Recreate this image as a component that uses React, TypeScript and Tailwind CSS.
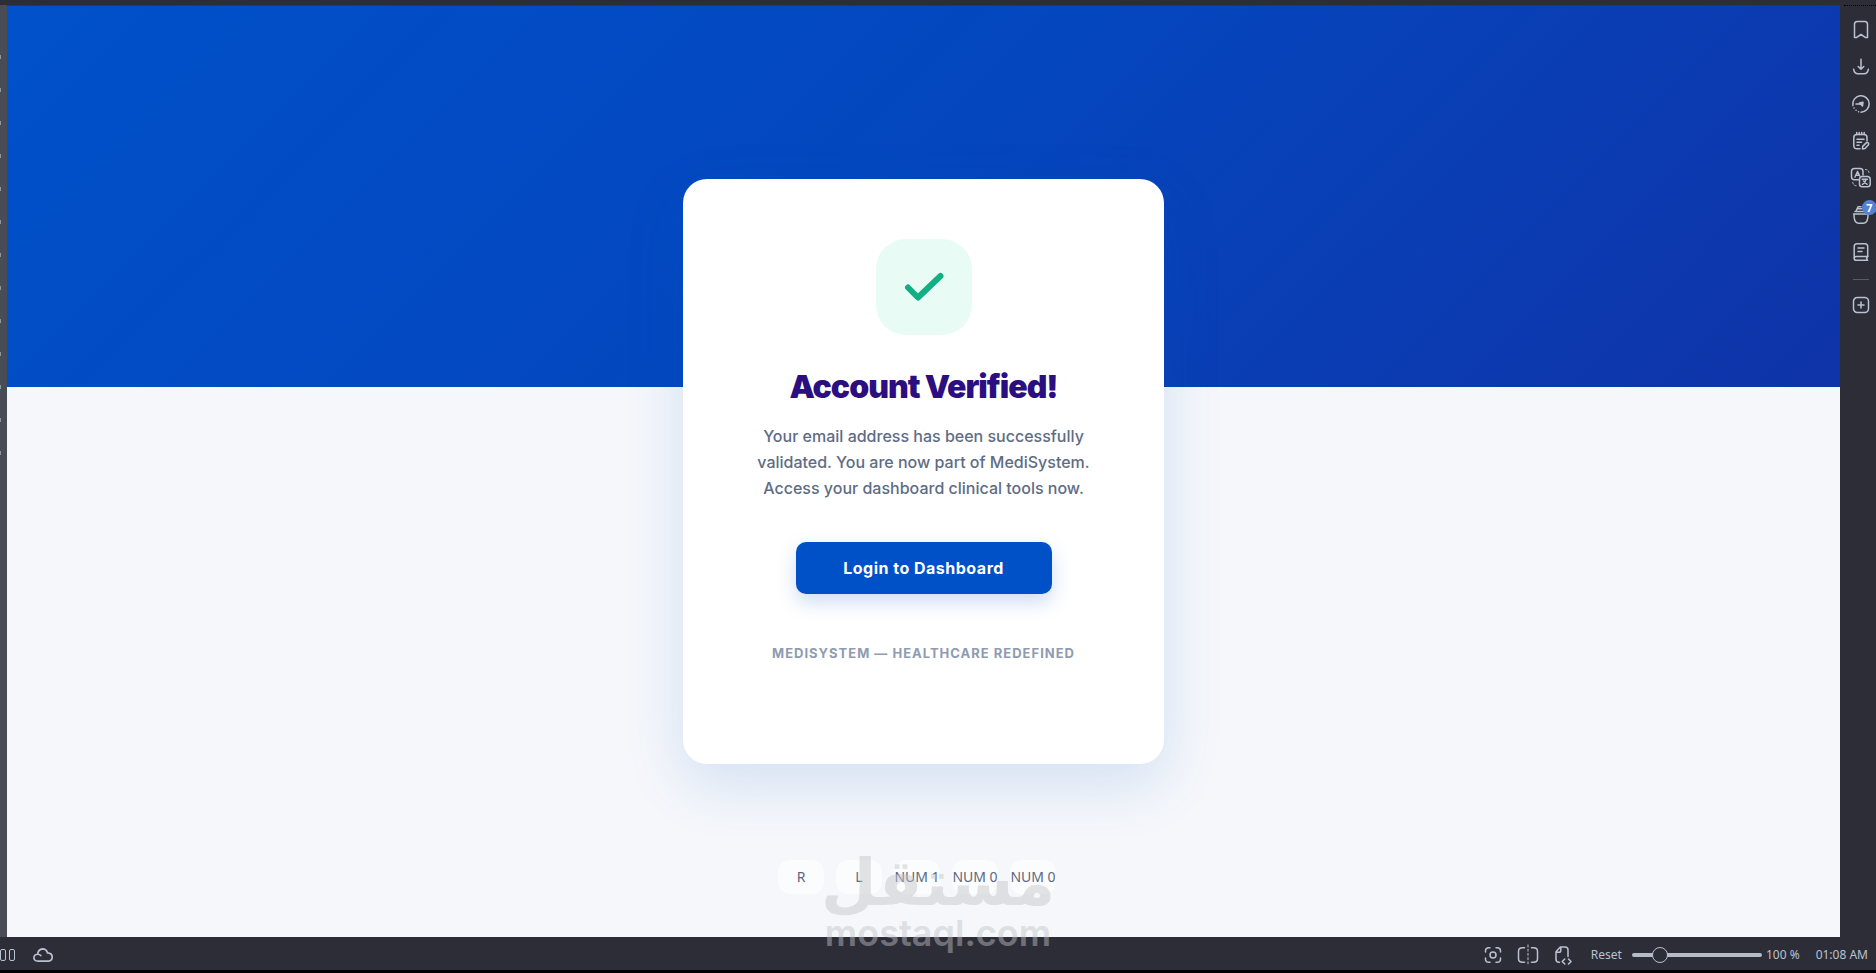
import React from 'react';

interface IconProps {
  children: React.ReactNode;
  size?: string;
}

const Icon: React.FC<IconProps> = ({ children, size = 'size-[18px]' }) => (
  <svg
    viewBox="0 0 18 18"
    className={`${size} shrink-0 overflow-visible`}
    fill="none"
    stroke="currentColor"
    strokeWidth="1.5"
    strokeLinecap="round"
    strokeLinejoin="round"
    aria-hidden="true"
  >
    {children}
  </svg>
);

const SIDE_TOOLS = [
  {
    label: 'Bookmarks',
    icon: <path d="M2.5 3.600Q2.500.600 5.200.600h7.600q2.700 0 2.700 3v13h-1.800L9 13.500l-4.700 3.100H2.500z" />,
  },
  {
    label: 'Downloads',
    icon: <path d="M9 1.200v9.600M6.200 8.500 9 11.200l2.800-2.700M1.600 11.200c.6 3.500 2 4.600 4.400 4.600h6c2.400 0 3.800-1.100 4.400-4.600" />,
  },
  {
    label: 'Speed',
    icon: (
      <>
        <path d="M.9 10.500A8.200 8.200 0 1 1 9 17.200" />
        <path d="M4 9h5" />
        <path d="M7.500 8 11 7.200 10.500 11z" fill="currentColor" />
        <path d="M2 13h.1M4 15.300h.1M6.500 16.800h.1" />
      </>
    ),
  },
  {
    label: 'Notes',
    icon: (
      <>
        <path d="M8 16.800H5Q1.800 16.800 1.800 13.500V5.500Q1.800 2.500 5 2.500h7q3 0 3 3V9" />
        <path d="M4.700.6v2M7.200.6v2M9.700.6v2M12.200.6v2M5 7.300h7M5 10.300h4.500M5 13.200h2" />
        <path d="m10.500 17 .2-2.600 3.500-3.500q1.200-.9 2.200.1.800 1-.1 2.100l-3.300 3.500z" />
      </>
    ),
  },
  {
    label: 'Translate',
    icon: (
      <>
        <path d="M6.500 10.800H2.500Q-.5 10.800-.5 7.800V2.500Q-.5-.5 2.500-.5H8q3 0 3 3v3.500" />
        <path d="m3 8 2.500-5.500L7.700 7M4 6.300h2.800" />
        <rect x="7.500" y="7.500" width="10.700" height="10.300" rx="2.800" />
        <path d="M10.200 10.300h5.200M14 10.500q-.6 3.200-3.500 4.800M11.500 12l3.500 3.300" />
        <path d="M13.500.5q3 .2 3.500 3M.8 13.500q.5 3 3.500 3.300" strokeDasharray="1.500 2" strokeWidth="1" />
      </>
    ),
  },
  {
    label: 'Basket',
    badge: 7,
    icon: (
      <>
        <path d="M1.500 8h15M2 8.200Q1.800 17.200 6.500 17.200h5Q16.200 17.200 16 8.200" />
        <path d="M3 5.500h9M5 2.800h5M4 5.300 6 .8h3" />
      </>
    ),
  },
  {
    label: 'Reading list',
    icon: (
      <>
        <path d="M15.700 13.500V3.500q0-2.800-2.800-2.800H5Q2.200.700 2.200 3.500v11" />
        <path d="M15.700 13.500H4.300q-2.100 0-2.100 1.900t2.100 1.900h11.400l-1.200-1.900z" />
        <path d="M6 5h6M6 8.500h4" />
      </>
    ),
  },
];

const ZOOM_TOOLS = [
  {
    label: 'Capture',
    icon: (
      <>
        <path d="M1.500 6V5q0-3.300 3.300-3.300H6M12 1.700h1.200q3.300 0 3.300 3.300v1M16.500 12v1q0 3.300-3.300 3.300H12M6 16.300H4.800Q1.500 16.300 1.500 13v-1" />
        <circle cx="9" cy="9" r="3" />
      </>
    ),
  },
  {
    label: 'Split view',
    icon: (
      <>
        <path d="M5.500 1.800H3.500Q-.5 1.800-.5 5.300v7.400q0 3.500 4 3.500h2M12.500 1.800h2q4 0 4 3.500v7.400q0 3.500-4 3.500h-2" />
        <path d="M9-1v20" strokeDasharray="2 2.200" strokeWidth="1" />
      </>
    ),
  },
  {
    label: 'Page source',
    icon: (
      <>
        <path d="M5.500 16.200H5q-3 0-3-3V5.800L6.300 1H11q3 0 3 3v6.500M2.300 6.300H5q1.800 0 1.800-1.800V1.200" />
        <path d="m10.800 13-2.600 2.500 2.600 2.500M14.500 13l2.600 2.500-2.600 2.500" />
      </>
    ),
  },
];

const KEYS = ['R', 'L', 'NUM 1', 'NUM 0', 'NUM 0'];

const SideBar = () => (
  <aside className="w-9 shrink-0 bg-[#2d2d38] text-[#b9c2d0]">
    <div className="ml-1 border-t border-dotted border-black" />
    <nav className="flex w-[42px] flex-col items-center pt-[5px]">
      {SIDE_TOOLS.map(tool => (
        <button key={tool.label} aria-label={tool.label} className="relative flex h-[37px] w-8 items-center justify-center">
          <Icon>{tool.icon}</Icon>
          {tool.badge && (
            <span className="absolute top-1 right-0 flex size-[15px] items-center justify-center rounded-full bg-[#5482d2] font-['Noto_Sans',sans-serif] text-[11px] leading-none font-bold text-white">
              {tool.badge}
            </span>
          )}
        </button>
      ))}
      <hr className="mt-[9px] mb-[6px] w-4 border-[#595b67]" />
      <button aria-label="Add" className="flex h-[37px] w-8 items-center justify-center">
        <Icon>
          <rect x="1.500" y="1.500" width="15" height="15" rx="3.800" />
          <path d="M9 6v6M6 9h6" />
        </Icon>
      </button>
    </nav>
  </aside>
);

const VerifiedCard = () => (
  <section className="relative flex h-[585px] w-[481px] flex-col items-center rounded-3xl bg-white px-12 pt-[60px] text-center shadow-[0_20px_60px_rgba(0,92,190,0.14)]">
    <div className="flex size-24 items-center justify-center rounded-[30px] bg-[#e8fcf5]">
      <svg viewBox="0 0 40 30" className="h-[30px] w-10" fill="none" stroke="#12ae84" strokeWidth="6" strokeLinecap="round" strokeLinejoin="round" aria-hidden="true">
        <path d="m4 15.500 10 10L36.500 4" />
      </svg>
    </div>
    <h1 className="mt-8 text-[32px] leading-10 font-black tracking-[-1px] text-[#2b0f80]">Account Verified!</h1>
    <p className="mt-4 w-[360px] text-base leading-[26px] font-medium text-[#5e6c84]">
      Your email address has been successfully validated. You are now part of MediSystem. Access your dashboard clinical tools now.
    </p>
    <a
      href="#dashboard"
      className="mt-[41px] flex h-[52px] w-64 items-center justify-center rounded-[10px] bg-[#0051c8] text-base font-bold tracking-[0.5px] text-white shadow-[0_8px_20px_rgba(0,82,204,0.2)]"
    >
      Login to Dashboard
    </a>
    <p className="mt-12 text-[13px] leading-[22px] font-bold tracking-[1px] text-[#8f9bb0] uppercase">MediSystem — Healthcare Redefined</p>
  </section>
);

const StatusBar = () => (
  <footer className="flex h-[33px] shrink-0 items-center justify-between bg-[#2d2d38] pt-[3px] pr-2 font-['Noto_Sans',sans-serif] text-xs text-[#b9c2d0]">
    <div className="flex items-center gap-[18px]">
      <button aria-label="Panels" className="flex gap-[3px]">
        <span className="h-3 w-[6px] rounded-[2px] border border-current" />
        <span className="h-3 w-[6px] rounded-[2px] border border-current" />
      </button>
      <button aria-label="Sync">
        <Icon size="size-5">
          <path d="M4.500 14.500q-3.500 0-3.700-3 0-2.800 3.300-3.200Q4.600 4 8.700 3.500q3.300 0 4.400 3.600 4 .2 4.200 3.700 0 3.500-3.500 3.700zM4.100 8.300q1.800-.1 2.900 1.200" />
        </Icon>
      </button>
    </div>
    <div className="flex items-center">
      <div className="mr-[19px] flex gap-[17px]">
        {ZOOM_TOOLS.map(tool => (
          <button key={tool.label} aria-label={tool.label}>
            <Icon>{tool.icon}</Icon>
          </button>
        ))}
      </div>
      <button className="mr-[10px]">Reset</button>
      <input
        type="range"
        aria-label="Page zoom"
        min={20}
        max={500}
        defaultValue={103}
        className="mr-1 h-1 w-[130px] appearance-none rounded-full bg-[#b4bccb] [&::-webkit-slider-thumb]:size-4 [&::-webkit-slider-thumb]:appearance-none [&::-webkit-slider-thumb]:rounded-full [&::-webkit-slider-thumb]:border [&::-webkit-slider-thumb]:border-[#b9c2d0] [&::-webkit-slider-thumb]:bg-[#2d2d38]"
      />
      <span className="mr-4">100 %</span>
      <time>01:08 AM</time>
    </div>
  </footer>
);

// tab strip of the neighbouring panel, only its last pixels are visible
const TabEdge = () => (
  <div className="flex w-[7px] shrink-0 flex-col gap-[29px] bg-[#4a4c55] pt-[50px]">
    {Array.from({ length: 13 }, (_, i) => (
      <span key={i} className="h-1 w-px bg-[#8e96a5]" />
    ))}
  </div>
);

const Watermark = () => (
  <div className="pointer-events-none absolute inset-x-0 bottom-[22px] flex flex-col items-center text-[#c1c3c8] opacity-45">
    <span lang="ar" dir="rtl" className="font-['DejaVu_Sans',sans-serif] text-[64px] leading-[64px] font-bold">
      مستقل
    </span>
    <span className="font-['Inter',sans-serif] text-4xl leading-9 font-semibold">mostaql.com</span>
  </div>
);

const App = () => (
  <div className="relative flex h-screen flex-col overflow-hidden bg-black font-['Inter',sans-serif]">
    <div className="h-[5px] shrink-0 bg-[#2d2d38]" />
    <div className="flex min-h-0 flex-1">
      <TabEdge />
      <main className="relative flex min-w-0 flex-1 items-center justify-center border-t border-[#123a8c] bg-[#f5f7fb]">
        <div className="absolute inset-x-0 top-0 h-[381px] bg-linear-135 from-[#0051ca] via-[#0446be] to-[#0f33a8]" />
        <VerifiedCard />
        <div className="absolute inset-x-0 bottom-[43px] flex justify-center gap-3 pr-[13px] font-['Noto_Sans',sans-serif] text-sm text-[#5d687d]">
          {KEYS.map((key, i) => (
            <kbd key={i} className="flex h-[34px] w-[46px] items-center justify-center rounded-xl bg-white/60 font-['Noto_Sans',sans-serif] whitespace-nowrap">
              {key}
            </kbd>
          ))}
        </div>
      </main>
      <SideBar />
    </div>
    <StatusBar />
    <div className="h-[3px] shrink-0 bg-black" />
    <Watermark />
  </div>
);

export default App;
